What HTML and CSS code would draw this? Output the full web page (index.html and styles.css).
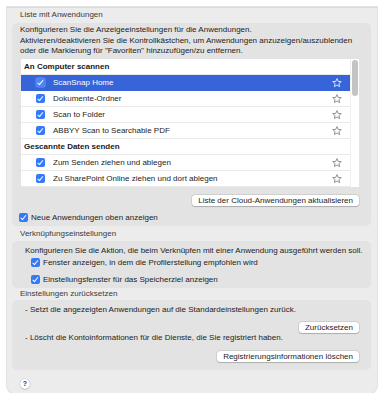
FILE: index.html
```html
<!DOCTYPE html>
<html lang="de">
<head>
<meta charset="utf-8">
<title>Anwendungen</title>
<link rel="stylesheet" href="styles.css">
</head>
<body>
<svg class="defs" width="0" height="0" aria-hidden="true">
  <defs>
    <symbol id="star" viewBox="0 0 10 10">
      <polygon points="5,0.6 6.18,3.38 9.28,3.61 6.9,5.62 7.65,8.64 5,7 2.35,8.64 3.1,5.62 0.72,3.61 3.82,3.38" fill="none" stroke="currentColor" stroke-width="0.8" stroke-linejoin="round"/>
    </symbol>
  </defs>
</svg>
<div class="window">
  <div class="group-label first">Liste mit Anwendungen</div>
  <div class="box box-apps">
    <p class="desc">Konfigurieren Sie die Anzeigeeinstellungen für die Anwendungen.<br>Aktivieren/deaktivieren Sie die Kontrollkästchen, um Anwendungen anzuzeigen/auszublenden<br>oder die Markierung für "Favoriten" hinzuzufügen/zu entfernen.</p>
    <div class="table">
      <div class="rows">
        <div class="row head">An Computer scannen</div>
        <div class="row sel"><span class="cb"></span><span class="name">ScanSnap Home</span><svg class="star"><use href="#star"/></svg></div>
        <div class="row"><span class="cb"></span><span class="name">Dokumente-Ordner</span><svg class="star"><use href="#star"/></svg></div>
        <div class="row"><span class="cb"></span><span class="name">Scan to Folder</span><svg class="star"><use href="#star"/></svg></div>
        <div class="row"><span class="cb"></span><span class="name">ABBYY Scan to Searchable PDF</span><svg class="star"><use href="#star"/></svg></div>
        <div class="row head">Gescannte Daten senden</div>
        <div class="row"><span class="cb"></span><span class="name">Zum Senden ziehen und ablegen</span><svg class="star"><use href="#star"/></svg></div>
        <div class="row"><span class="cb"></span><span class="name">Zu SharePoint Online ziehen und dort ablegen</span><svg class="star"><use href="#star"/></svg></div>
      </div>
      <div class="scrollbar"><div class="thumb"></div></div>
    </div>
    <div class="btn-row"><button class="btn">Liste der Cloud-Anwendungen aktualisieren</button></div>
    <div class="check-row outer"><span class="cb"></span><span>Neue Anwendungen oben anzeigen</span></div>
  </div>

  <div class="group-label second">Verknüpfungseinstellungen</div>
  <div class="box box-link">
    <p class="line">Konfigurieren Sie die Aktion, die beim Verknüpfen mit einer Anwendung ausgeführt werden soll.</p>
    <div class="check-row r1"><span class="cb"></span><span>Fenster anzeigen, in dem die Profilerstellung empfohlen wird</span></div>
    <div class="check-row r2"><span class="cb"></span><span>Einstellungsfenster für das Speicherziel anzeigen</span></div>
  </div>

  <div class="group-label third">Einstellungen zurücksetzen</div>
  <div class="box box-reset">
    <p class="line">- Setzt die angezeigten Anwendungen auf die Standardeinstellungen zurück.</p>
    <div class="btn-row b1"><button class="btn">Zurücksetzen</button></div>
    <p class="line">- Löscht die Kontoinformationen für die Dienste, die Sie registriert haben.</p>
    <div class="btn-row b2"><button class="btn">Registrierungsinformationen löschen</button></div>
  </div>

  <div class="help">?</div>
</div>
</body>
</html>
```

FILE: styles.css
```css
* { box-sizing: border-box; }

html, body {
  margin: 0;
  padding: 0;
  background: #ffffff;
}

body {
  font-family: "Liberation Sans", Arial, sans-serif;
  font-size: 8px;
  color: #1c1c1c;
}

.defs { position: absolute; width: 0; height: 0; }

.window {
  margin: 7px 0 0 7px;
  width: 370px;
  height: 386px;
  background: #ececec;
  border-top: 1px solid #d9d9d9;
  border-radius: 0 0 7px 7px;
  box-shadow: 0 0 0 1px #e2e2e2;
  padding-top: 2px;
  display: flex;
  flex-direction: column;
}

.group-label {
  height: 10px;
  line-height: 10px;
  padding-left: 13px;
  color: #3a3a3a;
  white-space: nowrap;
}
.group-label.first { margin-bottom: 3px; }
.group-label.second { margin-top: 3px; margin-bottom: 2px; }
.group-label.third { margin-top: 1px; margin-bottom: 1px; }

.box {
  margin: 0 6px 0 5px;
  background: #e3e3e3;
  border-radius: 5px;
  display: flex;
  flex-direction: column;
}

.box-apps { padding: 2px 12px 4px 8px; }
.box-link { padding: 5px 12px 4px 13px; }
.box-reset { padding: 5px 12px 8px 13px; }

p { margin: 0; }

.desc {
  line-height: 10.5px;
  margin-bottom: 2.5px;
  white-space: nowrap;
}

.line {
  height: 10px;
  line-height: 10px;
  white-space: nowrap;
}

/* table */
.table {
  margin-left: 1px;
  width: 338px;
  height: 128px;
  background: #ffffff;
  display: flex;
}

.rows {
  width: 329px;
  display: flex;
  flex-direction: column;
}

.row {
  height: 16px;
  border-bottom: 1px solid #e9e9e9;
  display: flex;
  align-items: center;
  padding: 0 8px 0 15px;
  color: #1c1c1c;
  white-space: nowrap;
}

.row.head {
  padding-left: 3px;
  font-weight: bold;
  color: #1a1a1a;
}

.row .name {
  margin-left: 8px;
  flex: 1;
}

.row.sel {
  background: #3864d9;
  color: #ffffff;
  border-bottom-color: #3864d9;
}

.star {
  width: 10px;
  height: 10px;
  color: #7a7a7a;
}
.row.sel .star { color: #ffffff; }

.scrollbar {
  width: 9px;
  border-left: 1px solid #efefef;
  padding: 1px 1px 0 1px;
}
.thumb {
  width: 6px;
  height: 36px;
  background: #c4c4c4;
  border-radius: 3px;
}

/* checkbox */
.cb {
  position: relative;
  flex: none;
  width: 9px;
  height: 9px;
  border-radius: 2px;
  background: #3479f5;
}
.cb::after {
  content: "";
  position: absolute;
  left: 3px;
  top: 1px;
  width: 2px;
  height: 4.5px;
  border: solid #ffffff;
  border-width: 0 1.3px 1.3px 0;
  transform: rotate(40deg);
}
.row.sel .cb {
  background: #4f84f4;
  box-shadow: 0 0 0 0.5px rgba(255, 255, 255, 0.3);
}

.check-row {
  height: 10px;
  display: flex;
  align-items: center;
  gap: 3px;
  white-space: nowrap;
}
.check-row.outer { margin-top: 6px; margin-left: -1px; }
.check-row.r1 { margin-top: 1px; padding-left: 6px; }
.check-row.r2 { margin-top: 7px; padding-left: 6px; }

/* buttons */
.btn-row {
  display: flex;
  justify-content: flex-end;
}
.box-apps .btn-row { margin-top: 8px; }
.btn-row.b1 { margin-top: 7px; }
.btn-row.b2 { margin-top: 8px; }

.btn {
  height: 11px;
  padding: 0 6px;
  border: none;
  border-radius: 3px;
  background: #ffffff;
  font-family: "Liberation Sans", Arial, sans-serif;
  font-size: 8px;
  line-height: 11px;
  color: #1c1c1c;
  box-shadow: 0 0 0 0.5px rgba(0, 0, 0, 0.14), 0 0.5px 1px rgba(0, 0, 0, 0.18);
}

.help {
  margin: 9px 0 0 13px;
  width: 10px;
  height: 10px;
  border-radius: 50%;
  background: #ffffff;
  box-shadow: 0 0 0 0.5px rgba(0, 0, 0, 0.15), 0 0.5px 1px rgba(0, 0, 0, 0.2);
  font-size: 7px;
  font-weight: bold;
  line-height: 10px;
  text-align: center;
  color: #333333;
}
```
